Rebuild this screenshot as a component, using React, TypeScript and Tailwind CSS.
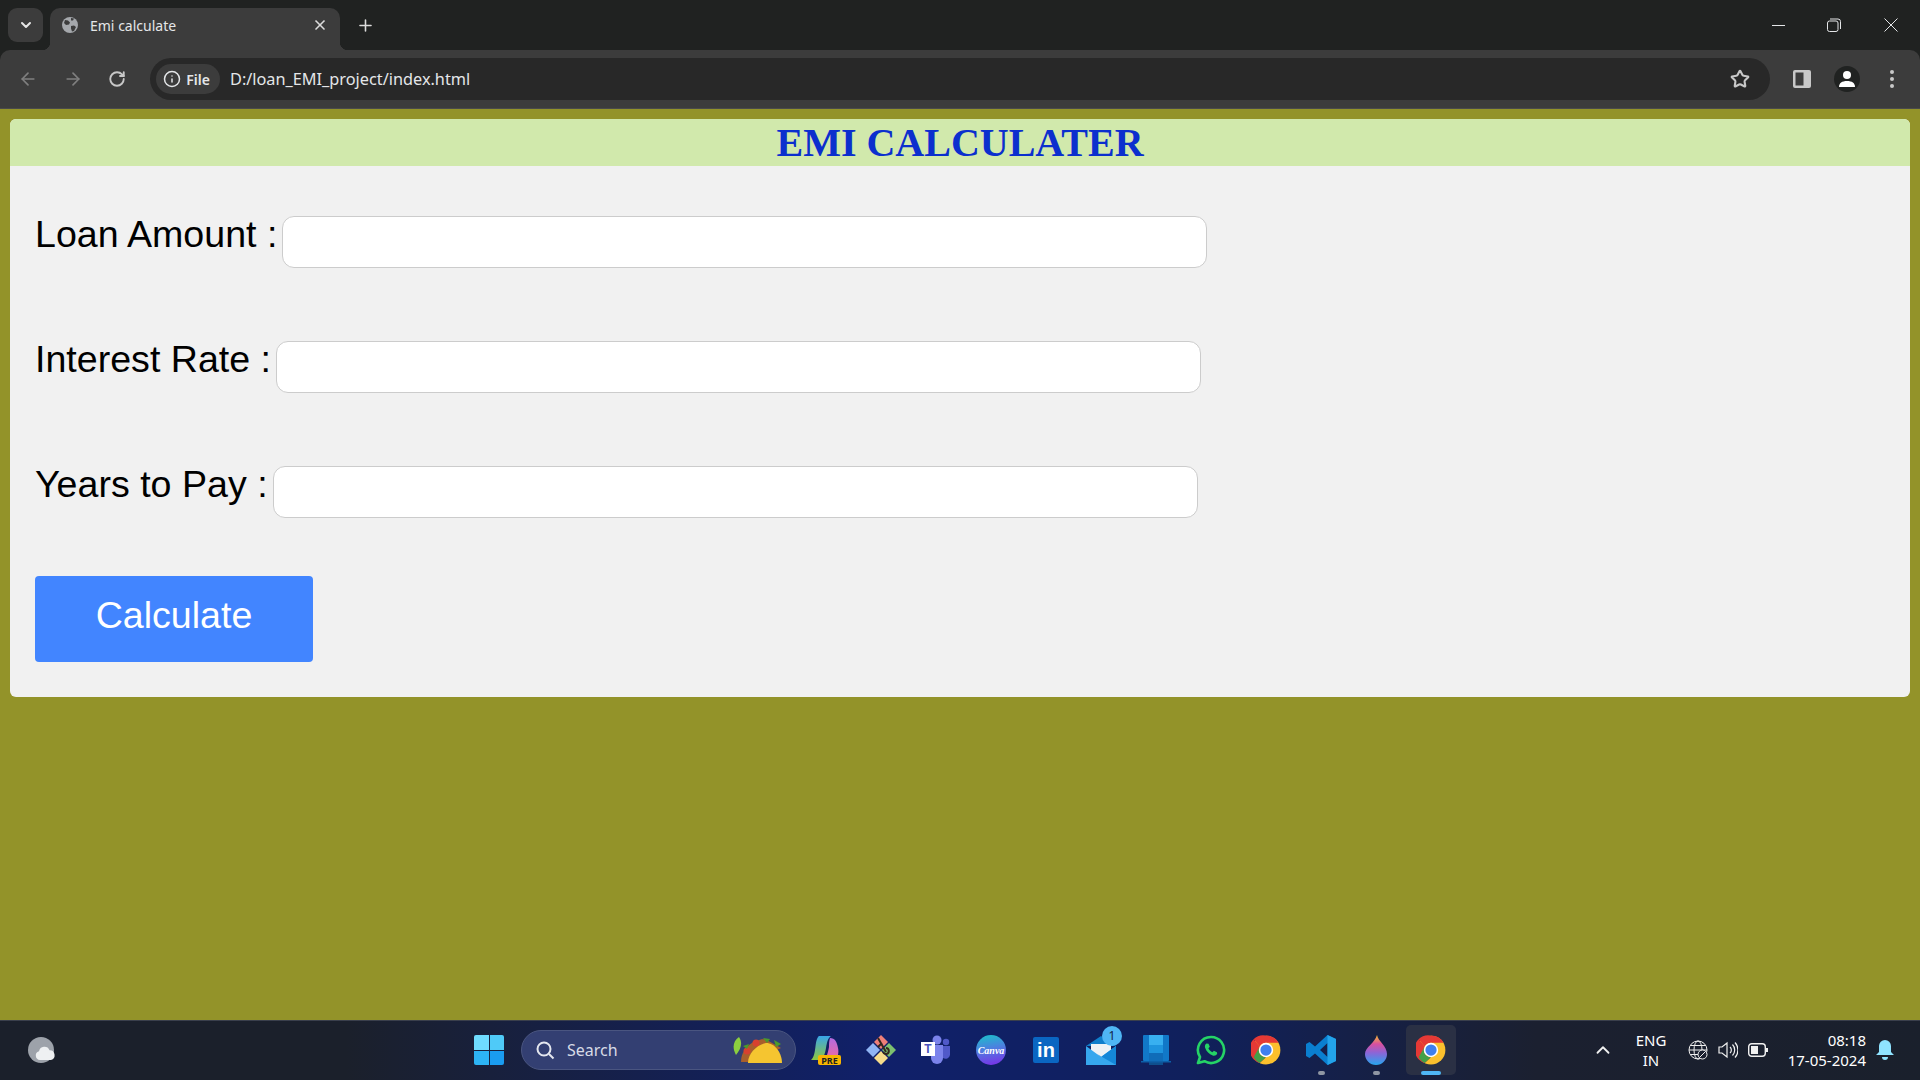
import { ArrowLeft, ArrowRight, ChevronDown, ChevronUp, Info, Plus, RotateCw, Star, X } from "lucide-react";

const uiFont = "font-['Noto_Sans','Open_Sans',sans-serif]";

function Globe() {
  return (
    <svg width="16" height="16" viewBox="0 0 16 16">
      <circle cx="8" cy="8" r="8" fill="#a5a8ac" />
      <path d="M3 3l3 .5 2 2-1 2-3 .5-2-2zM9 9l3-.5 2 1.5-2 4-2 .5-1-3zM9 1l3 .5-1 2-2 0z" fill="#3c3c3c" />
    </svg>
  );
}

function ChromeIcon() {
  return (
    <svg width="30" height="30" viewBox="0 0 48 48">
      <circle cx="24" cy="24" r="23" fill="#fbc02d" />
      <path d="M24 1a23 23 0 0 1 20 11.5H24a11.5 11.5 0 0 0-10 5.8L4 6.8A23 23 0 0 1 24 1z" fill="#e53935" />
      <path d="M4 6.8l10 11.5a11.5 11.5 0 0 0 10 17.2L14 44.7A23 23 0 0 1 4 6.8z" fill="#e53935" />
      <path d="M4.200 35.500L14 18.300a11.500 11.500 0 0 0 10 17.200l-10 9.200A23 23 0 0 1 4.200 35.500z" fill="#43a047" />
      <circle cx="24" cy="24" r="11.500" fill="#fff" />
      <circle cx="24" cy="24" r="9" fill="#3f7fee" />
    </svg>
  );
}

function Copilot() {
  return (
    <div className="relative h-[30px] w-[30px]">
      <svg width="30" height="30" viewBox="0 0 30 30">
        <defs>
          <linearGradient id="cpa" x1="0" y1="0" x2="0" y2="1">
            <stop offset="0" stopColor="#39a5e8" />
            <stop offset="1" stopColor="#8ec63f" />
          </linearGradient>
          <linearGradient id="cpb" x1="0" y1="0" x2="0" y2="1">
            <stop offset="0" stopColor="#b46be0" />
            <stop offset="1" stopColor="#ef6aa0" />
          </linearGradient>
        </defs>
        <path d="M8 1h12c-3 2-4 6-5 12-1 6-3 12-7 12H0C6 20 3 5 8 1z" fill="url(#cpa)" />
        <path d="M19 3c5 0 7 4 8 10 1 4 0 10-3 12H12c4-2 5-8 6-13 0-3 0-6 1-9z" fill="url(#cpb)" />
      </svg>
      <span className="absolute bottom-0 left-[7px] flex h-[10px] w-[23px] items-center justify-center rounded-[2px] bg-[#f8b500] text-[9px] leading-none font-bold text-[#222]">PRE</span>
    </div>
  );
}

function Diamond() {
  return (
    <svg width="30" height="30" viewBox="0 0 30 30">
      <path d="M7 8l7 7-7 7-7-7z" fill="#8fb4f5" />
      <path d="M15 16l7 7-7 7-7-7z" fill="#f6dc8b" />
      <path d="M23 8l7 7-7 7-7-7z" fill="#7cc06f" />
      <path d="M15 0l7 7-7 7-7-7z" fill="#ee7f78" />
      <path d="M12 3l8 14M16 8l-4 4M20 13a3 3 0 1 1-3 4" stroke="#33281f" strokeWidth="2" fill="none" />
    </svg>
  );
}

function Teams() {
  return (
    <div className="relative h-[30px] w-[30px]">
      <svg width="30" height="30" viewBox="0 0 30 30">
        <circle cx="16" cy="5" r="4.500" fill="#7b83eb" />
        <circle cx="25" cy="7" r="3.200" fill="#5059c9" />
        <path d="M10 10h12v13a6 6 0 0 1-12 0z" fill="#7b83eb" />
        <path d="M22 11h7v9a4.500 4.500 0 0 1-7 3z" fill="#5059c9" />
      </svg>
      <span className="absolute top-[7px] left-0 flex h-[14px] w-[14px] items-center justify-center bg-white font-['Liberation_Sans',sans-serif] text-[12px] leading-none font-bold text-[#4b53bc]">T</span>
    </div>
  );
}

function Canva() {
  return (
    <div className="flex h-[30px] w-[30px] items-center justify-center rounded-full bg-[linear-gradient(170deg,#19c3c9_0%,#4d7fe0_45%,#7d2ae8_100%)]">
      <span className="font-['Liberation_Serif',serif] text-[10px] font-bold text-white italic">Canva</span>
    </div>
  );
}

function Linkedin() {
  return (
    <div className="flex h-[26px] w-[26px] items-center justify-center rounded-[2px] bg-[#0a66c2]">
      <span className="font-['Liberation_Sans',sans-serif] text-[20px] leading-none font-bold text-white">in</span>
    </div>
  );
}

function Mail() {
  return (
    <div className="relative h-[30px] w-[30px]">
      <svg width="30" height="30" viewBox="0 0 30 30">
        <path d="M0 11L15 1l15 10z" fill="#0f7ecb" />
        <path d="M5 9h20v9l-10 6-10-6z" fill="#eef2f5" />
        <path d="M0 11l15 11 15-11v19H0z" fill="#36a7ee" />
        <path d="M11 19l19 11V11L15 22z" fill="#1487d8" />
      </svg>
      <span className="absolute -top-[9px] left-[16px] flex h-[20px] w-[20px] items-center justify-center rounded-full bg-[#4fb6f5] text-[12px] leading-none text-[#13244a]">1</span>
    </div>
  );
}

function PhoneLink() {
  return (
    <svg width="30" height="30" viewBox="0 0 30 30">
      <rect x="2" y="0" width="26" height="26" rx="1" fill="#1178c8" />
      <rect x="8" y="0" width="14" height="10" fill="#38b0f0" />
      <rect x="8" y="10" width="14" height="8" fill="#1e94de" />
      <rect x="8" y="18" width="14" height="8" fill="#106cb8" />
      <rect x="8" y="26" width="14" height="4" fill="#0e4f8e" />
      <rect x="0" y="26" width="30" height="1.500" fill="#0d5fa8" />
    </svg>
  );
}

function Whatsapp() {
  return (
    <svg width="30" height="30" viewBox="0 0 30 30">
      <path d="M15 2A13 13 0 0 0 4 22L2 28l6.500-1.800A13 13 0 1 0 15 2z" fill="none" stroke="#25d366" strokeWidth="2.600" strokeLinejoin="round" />
      <path d="M10.500 8.500c-1.500 1-2 2.500-1.300 4.500 1.200 3.500 4 6.300 7.500 7.500 2 .6 3.700-.2 4.500-1.700l-.3-1.500-3-1.500-1.500 1.500c-1.800-.8-3.300-2.300-4-4l1.400-1.500-1.300-3z" fill="#25d366" />
    </svg>
  );
}

function VsCode() {
  return (
    <svg width="30" height="30" viewBox="0 0 30 30">
      <path d="M21.500 0L30 4v22l-8.500 4L9 18.500 3.500 23 0 21V9l3.500-2L9 11.500zM21.500 8l-7.500 7 7.500 7z" fill="#0a7fd0" />
      <path d="M21.500 0L30 4v22l-8.500 4z" fill="#23a3ea" />
    </svg>
  );
}

function Drop() {
  return (
    <svg width="30" height="30" viewBox="0 0 30 30">
      <defs>
        <linearGradient id="dr" x1="0" y1="0" x2="0" y2="1">
          <stop offset="0" stopColor="#f7c12c" />
          <stop offset="0.3" stopColor="#d94f9f" />
          <stop offset="0.6" stopColor="#8a66d8" />
          <stop offset="1" stopColor="#26a6ee" />
        </linearGradient>
      </defs>
      <path d="M16 0c1 6 10 11 10 19a11 11 0 0 1-22 0C4 12 14 8 16 0z" fill="url(#dr)" />
    </svg>
  );
}

function Taco() {
  return (
    <svg width="50" height="26" viewBox="0 0 50 26">
      <path d="M6 0C0 4-1 11 3 18 8 12 10 6 6 0z" fill="#8ccf3f" />
      <path d="M8 25C8 13 18 3 32 2l16 9-30 14z" fill="#a85f2c" />
      <circle cx="14" cy="14" r="3.500" fill="#d8412f" />
      <circle cx="23" cy="6" r="3.500" fill="#d8412f" />
      <path d="M10 9l6-2-2 5zM30 1l7 1-3 4zM41 3l7 4-5 3z" fill="#4c9a2a" />
      <path d="M15 26C15 16 24 8 33 6c9 0 16 10 16 20z" fill="#f5c530" />
    </svg>
  );
}

function WindowsLogo() {
  return (
    <div className="grid h-[30px] w-[30px] grid-cols-2 gap-[1px]">
      <span className="rounded-tl-[2px] bg-[#6fdcff]" />
      <span className="rounded-tr-[2px] bg-[#4fcaf8]" />
      <span className="rounded-bl-[2px] bg-[#2db4f5]" />
      <span className="rounded-br-[2px] bg-[#1a9cf0]" />
    </div>
  );
}

function TaskIcon({ children, dot, active }: { children: React.ReactNode; dot?: boolean; active?: boolean }) {
  return (
    <div className={`relative flex h-[50px] w-[50px] items-center justify-center rounded-[5px] ${active ? "bg-[#2a3044]" : ""}`}>
      {children}
      {dot && <span className="absolute bottom-0 left-[22px] h-[4px] w-[7px] rounded-full bg-[#8f96a3]" />}
      {active && <span className="absolute bottom-0 left-[15px] h-[4px] w-[20px] rounded-full bg-[#4fb6f5]" />}
    </div>
  );
}

function Field({ label }: { label: string }) {
  return (
    <div className="flex items-start gap-[5px]">
      <label className="text-[37.6px] leading-[42px] whitespace-nowrap text-black">{label}</label>
      <input type="text" className="mt-[3px] h-[52px] w-[925px] rounded-[12px] border border-[#cccccc] bg-white" />
    </div>
  );
}

export default function App() {
  return (
    <div className="flex h-screen w-[1920px] flex-col overflow-hidden bg-[#939329]">
      <div className="bg-[#202221]">
        {/* title bar */}
        <div className={`flex h-[50px] items-start pt-[8px] pl-[8px] text-[#e4e6e8] ${uiFont}`}>
          <div className="flex h-[34px] w-[35px] items-center justify-center rounded-[9px] bg-[#3c3c3c]">
            <ChevronDown size={16} strokeWidth={3} color="#e6e6e6" />
          </div>
          <div className="relative ml-[7px] flex h-[42px] w-[290px] items-center rounded-t-[10px] bg-[#3c3c3c] px-[12px] pb-[8px]">
            <Globe />
            <span className="ml-[12px] flex-1 text-[14px]">Emi calculate</span>
            <X size={16} strokeWidth={2.500} color="#dcdcdc" />
            <span className="absolute bottom-0 -left-[8px] h-[8px] w-[8px] bg-[radial-gradient(circle_at_0_0,#202221_8px,#3c3c3c_8.5px)]" />
            <span className="absolute -right-[8px] bottom-0 h-[8px] w-[8px] bg-[radial-gradient(circle_at_100%_0,#202221_8px,#3c3c3c_8.5px)]" />
          </div>
          <div className="ml-[16px] flex h-[34px] items-center">
            <Plus size={19} strokeWidth={2} color="#dcdcdc" />
          </div>
          <div className="ml-auto flex h-[34px] items-center">
            <div className="flex w-[56px] justify-center"><span className="h-[1px] w-[13px] bg-[#e4e6e8]" /></div>
            <div className="flex w-[56px] justify-center">
              <svg width="14" height="14" viewBox="0 0 14 14" fill="none" stroke="#e4e6e8" strokeWidth="1">
                <rect x="0.500" y="3" width="10.500" height="10.500" rx="2" />
                <path d="M3 1h8a2.500 2.500 0 0 1 2.500 2.500V11" />
              </svg>
            </div>
            <div className="flex w-[58px] justify-center">
              <svg width="14" height="14" viewBox="0 0 14 14" fill="none" stroke="#e4e6e8" strokeWidth="1">
                <path d="M0.500 0.500l13 13M13.500 0.500l-13 13" />
              </svg>
            </div>
          </div>
        </div>

        {/* toolbar */}
        <div className={`flex h-[59px] items-center rounded-t-[10px] border-b border-[#4a4a4a] bg-[#3c3c3c] pr-[16px] pl-[18px] ${uiFont}`}>
          <ArrowLeft size={20} color="#7f7f7f" />
          <ArrowRight size={20} color="#7f7f7f" className="ml-[25px]" />
          <RotateCw size={18} color="#c8c8c8" strokeWidth={2.500} className="ml-[25px]" />
          <div className="ml-[24px] flex h-[42px] w-[1620px] items-center rounded-full bg-[#282828] pr-[20px] pl-[6px]">
            <div className="flex h-[30px] w-[64px] items-center justify-center gap-[5px] rounded-full bg-[#3c3c3c] pr-[3px] text-[#e4e6e8]">
              <Info size={18} />
              <span className="text-[14px] font-semibold">File</span>
            </div>
            <span className="ml-[10px] text-[16.3px] text-[#e4e6e8]">D:/loan_EMI_project/index.html</span>
            <Star size={20} color="#c8c8c8" strokeWidth={2.500} className="ml-auto" />
          </div>
          <svg width="18" height="18" viewBox="0 0 18 18" className="ml-[23px]">
            <rect width="18" height="18" rx="2" fill="#c8c8c8" />
            <rect x="2.500" y="2.500" width="8" height="13" fill="#3c3c3c" />
          </svg>
          <div className="ml-[23px] flex h-[26px] w-[26px] items-center justify-center rounded-full bg-[#202221]">
            <svg width="18" height="18" viewBox="0 0 18 18" fill="#fff">
              <circle cx="9" cy="5" r="4" />
              <path d="M1 17c0-4 3-6 8-6s8 2 8 6z" />
            </svg>
          </div>
          <div className="ml-[30px] flex flex-col gap-[3px]">
            <span className="h-[4px] w-[4px] rounded-full bg-[#c8c8c8]" />
            <span className="h-[4px] w-[4px] rounded-full bg-[#c8c8c8]" />
            <span className="h-[4px] w-[4px] rounded-full bg-[#c8c8c8]" />
          </div>
        </div>
      </div>

      {/* page */}
      <main className="flex-1 px-[10px] pt-[10px] font-['Liberation_Sans',Arial,sans-serif]">
        <div className="overflow-hidden rounded-[6px] bg-[#f1f1f1]">
          <h1 className="h-[47px] bg-[#d1e9ac] text-center font-['Liberation_Serif',serif] text-[40px] leading-[47px] font-bold text-[#0b2fce]">
            EMI CALCULATER
          </h1>
          <form className="flex flex-col items-start px-[25px] pt-[47px] pb-[35px]">
            <div className="flex flex-col gap-[70px]">
              <Field label="Loan Amount :" />
              <Field label="Interest Rate :" />
              <Field label="Years to Pay :" />
            </div>
            <button type="button" className="mt-[58px] h-[86px] w-[278px] rounded-[4px] bg-[#4285ff] pb-[8px] text-[37.6px] text-white">
              Calculate
            </button>
          </form>
        </div>
      </main>

      {/* taskbar */}
      <div className={`flex h-[60px] items-center border-t border-[#3a3f4c] bg-[linear-gradient(90deg,#1b202b_0%,#1b202b_18%,#10206a_46%,#10205c_62%,#1b2030_80%,#1a202c_100%)] pb-[1px] text-white ${uiFont}`}>
        <div className="ml-[28px] flex w-[28px] justify-center">
          <svg width="28" height="26" viewBox="0 0 28 26">
            <circle cx="13" cy="13" r="13" fill="#9da2aa" />
            <path d="M12 23a4.500 4.500 0 0 1-1-8.800 5.500 5.500 0 0 1 10.500-1A5 5 0 0 1 23 23z" fill="#eef0f2" />
          </svg>
        </div>
        <div className="ml-[418px]"><WindowsLogo /></div>
        <div className="ml-[17px] flex h-[40px] w-[275px] items-center rounded-full border border-[#4a5580] bg-[#333f72] pr-[12px] pl-[13px] text-[#d7dbe6]">
          <svg width="20" height="20" viewBox="0 0 20 20" fill="none" stroke="#e4e7ef" strokeWidth="2">
            <circle cx="9" cy="9" r="6.500" />
            <path d="M14 14l4.500 4.500" />
          </svg>
          <span className="ml-[12px] flex-1 text-[16px]">Search</span>
          <Taco />
        </div>
        <div className="ml-[5px] flex items-center gap-[5px]">
          <TaskIcon><Copilot /></TaskIcon>
          <TaskIcon><Diamond /></TaskIcon>
          <TaskIcon><Teams /></TaskIcon>
          <TaskIcon><Canva /></TaskIcon>
          <TaskIcon><Linkedin /></TaskIcon>
          <TaskIcon><Mail /></TaskIcon>
          <TaskIcon><PhoneLink /></TaskIcon>
          <TaskIcon><Whatsapp /></TaskIcon>
          <TaskIcon><ChromeIcon /></TaskIcon>
          <TaskIcon dot><VsCode /></TaskIcon>
          <TaskIcon dot><Drop /></TaskIcon>
          <TaskIcon active><ChromeIcon /></TaskIcon>
        </div>
        <ChevronUp size={22} strokeWidth={2} className="ml-[136px]" color="#f0f0f0" />
        <div className="ml-[15px] flex w-[44px] flex-col items-center text-[15px] leading-[20px]">
          <span>ENG</span>
          <span>IN</span>
        </div>
        <svg width="20" height="20" viewBox="0 0 20 20" fill="none" stroke="#f0f0f0" strokeWidth="1" className="ml-[15px]">
          <circle cx="10" cy="10" r="9" />
          <ellipse cx="10" cy="10" rx="4" ry="9" />
          <path d="M1 10h18M2.500 5.500h15M2.500 14.500h15" />
          <circle cx="14.500" cy="14.500" r="4.500" fill="#1b2030" />
          <path d="M11.500 17.500l6-6" />
        </svg>
        <svg width="20" height="18" viewBox="0 0 20 18" fill="none" stroke="#f0f0f0" strokeWidth="1.200" className="ml-[10px]">
          <path d="M1 6h3l5-4v14l-5-4H1z" />
          <path d="M12 6a4 4 0 0 1 0 6M14.500 3.500a8 8 0 0 1 0 11M17 1.500a11 11 0 0 1 0 15" />
        </svg>
        <svg width="20" height="14" viewBox="0 0 20 14" className="ml-[10px]">
          <rect x="0.700" y="0.700" width="16.600" height="12.600" rx="3" fill="none" stroke="#f0f0f0" strokeWidth="1.400" />
          <rect x="3" y="3" width="7" height="8" fill="#f0f0f0" />
          <rect x="18" y="5" width="2" height="4" fill="#f0f0f0" />
        </svg>
        <div className="ml-[20px] flex w-[78px] flex-col items-end text-[15px] leading-[20px] whitespace-nowrap">
          <span>08:18</span>
          <span>17-05-2024</span>
        </div>
        <svg width="18" height="20" viewBox="0 0 18 20" fill="#8fe3ff" className="ml-[10px]">
          <path d="M9 0a6 6 0 0 1 6 6v6l3 3H0l3-3V6a6 6 0 0 1 6-6zM6 17h6a3 3 0 0 1-6 0z" />
        </svg>
      </div>
    </div>
  );
}
